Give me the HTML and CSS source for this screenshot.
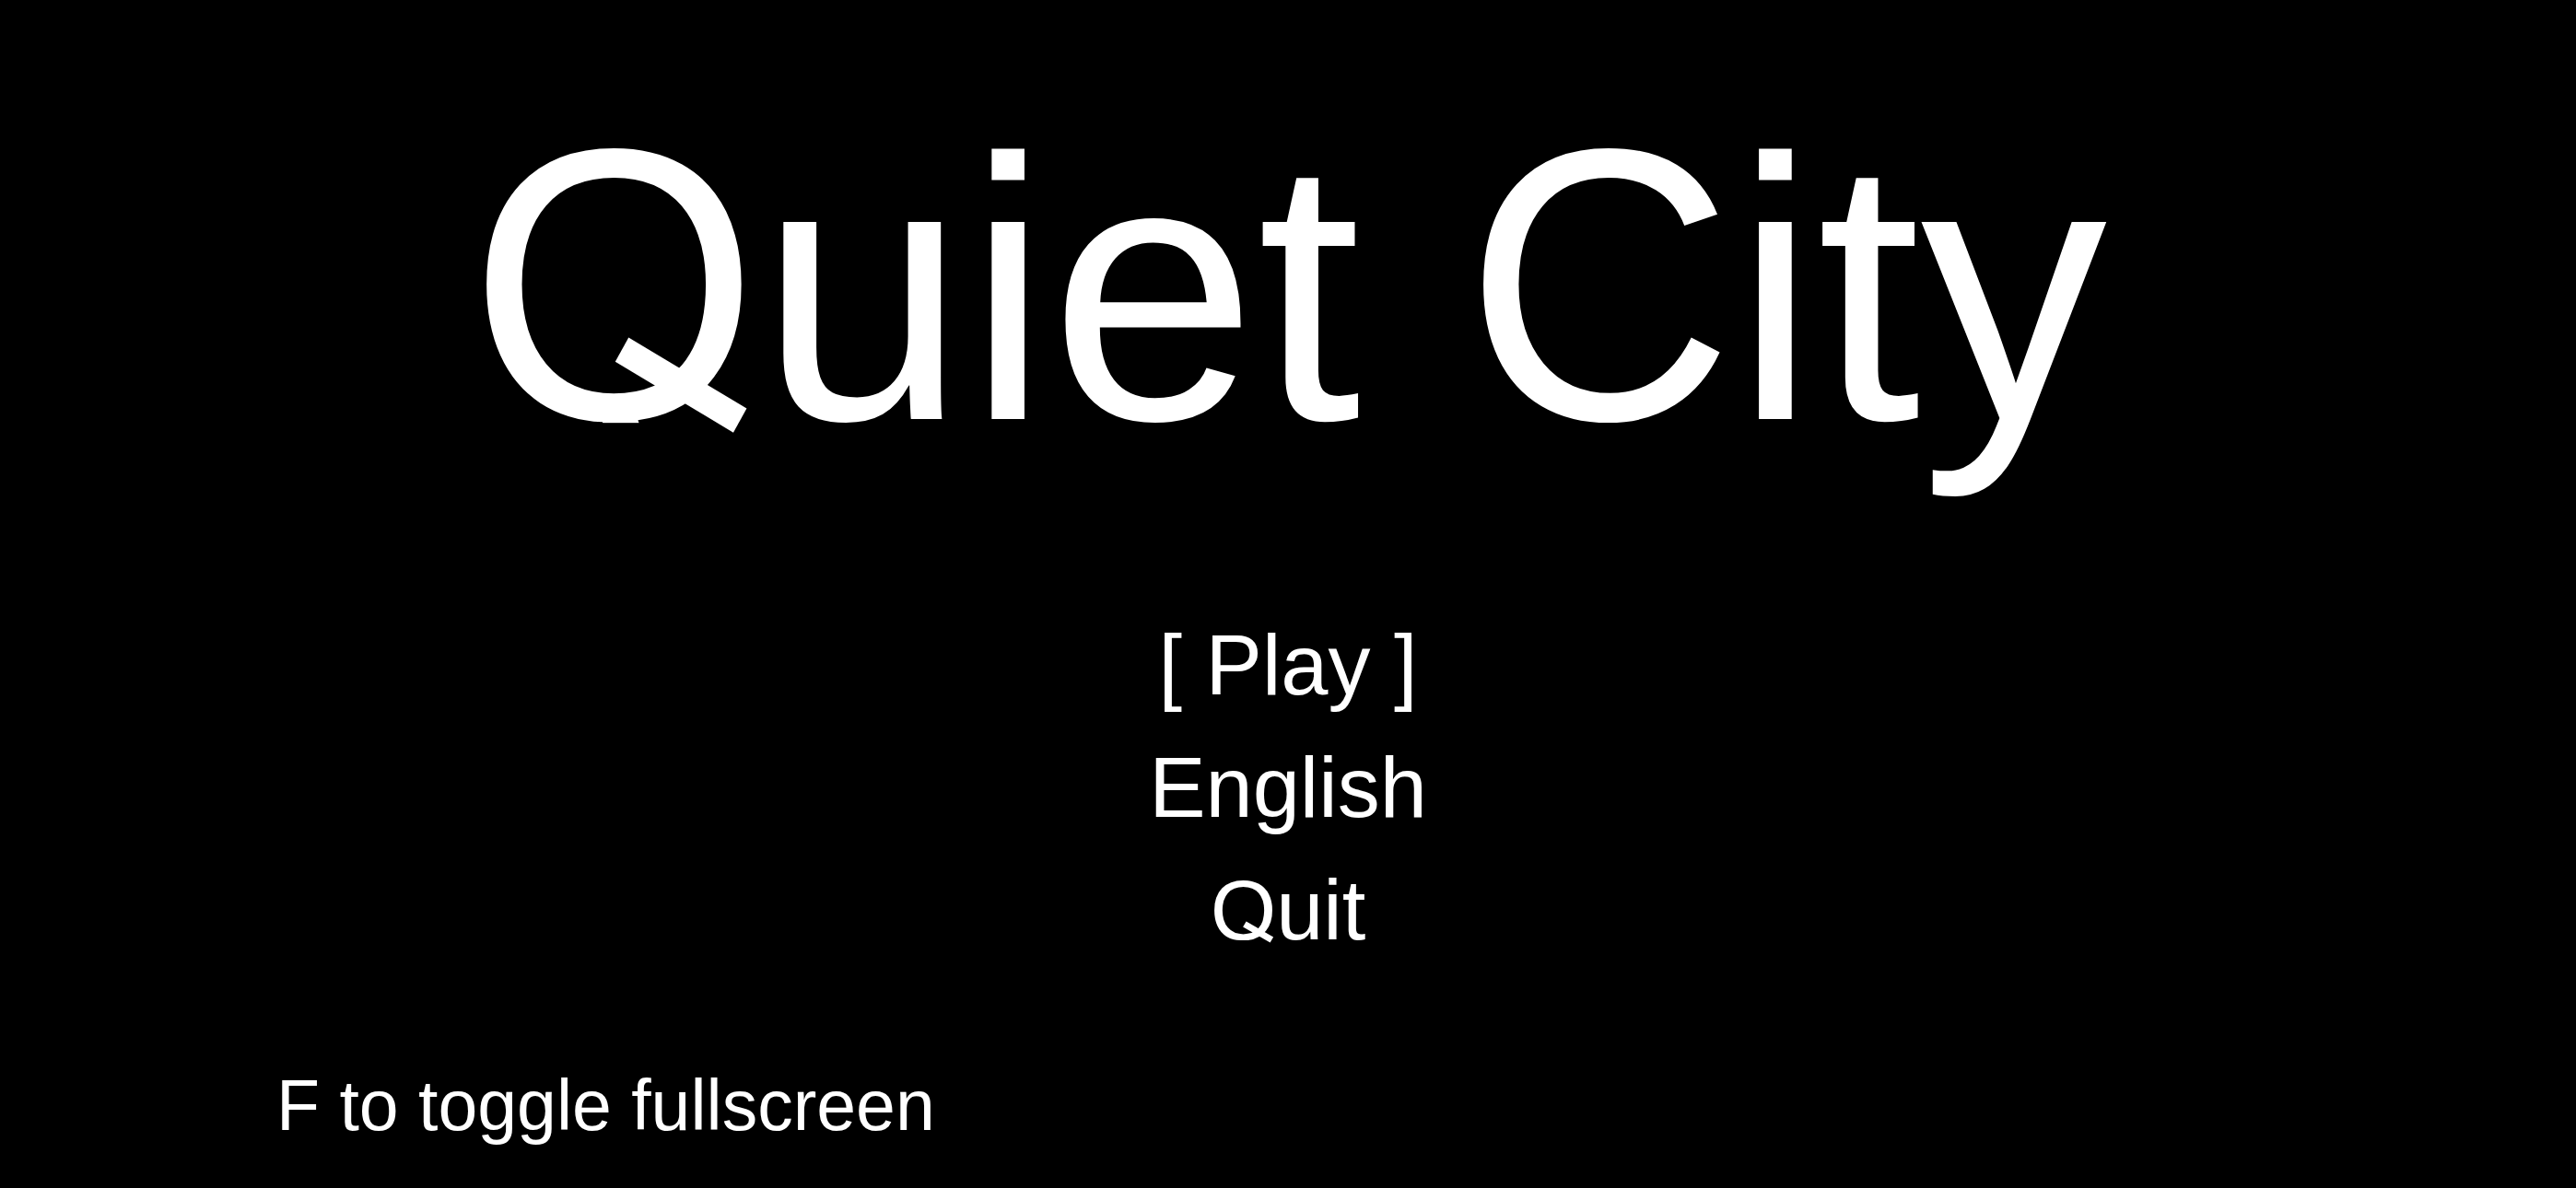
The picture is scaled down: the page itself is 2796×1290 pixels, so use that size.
FILE: index.html
```html
<!DOCTYPE html>
<html lang="en">
<head>
  <meta charset="UTF-8">
  <meta name="viewport" content="width=device-width, initial-scale=1.0">
  <title>Quiet City</title>
  <link rel="stylesheet" href="styles.css">
</head>
<body>
  <main class="title-screen">
    <h1 class="game-title"><span class="cap q">Q</span>uiet <span class="cap">C</span>ity</h1>

    <ul class="menu">
      <li class="menu-item selected">[ Play ]</li>
      <li class="menu-item">English</li>
      <li class="menu-item"><span class="q">Q</span>uit</li>
    </ul>

    <p class="hint">F to toggle fullscreen</p>
  </main>
</body>
</html>
```

FILE: styles.css
```css
/* title screen */
html, body {
  height: 100%;
}

body {
  margin: 0;
  background: #000;
  color: #fff;
  font-family: 'Liberation Sans', Arial, sans-serif;
  overflow: hidden;
}

.title-screen {
  display: flex;
  flex-direction: column;
  padding-top: 112px;
}

.game-title {
  margin: 0;
  font-size: 405px;
  font-weight: normal;
  line-height: 1;
  text-align: center;
}

/* taller capitals, scaled from the baseline */
.cap {
  display: inline-block;
  line-height: 1;
  transform: scaleY(1.04);
  transform-origin: 50% 0.8465em;
}

/* Q with a straight tail across the bowl */
.q {
  display: inline-block;
  position: relative;
  line-height: 1;
}

.q::before {
  content: '';
  position: absolute;
  left: 0.32em;
  top: 0.857em;
  width: 0.4em;
  height: 0.2em;
  background: #000;
}

.q::after {
  content: '';
  position: absolute;
  left: 0.41em;
  top: 0.633em;
  width: 0.365em;
  height: 0.072em;
  background: #fff;
  transform-origin: left center;
  transform: rotate(30deg);
}

.menu {
  list-style: none;
  margin: 139px 0 0;
  padding: 0;
  text-align: center;
}

.menu-item {
  font-size: 92px;
  line-height: 133px;
}

.hint {
  margin: 99px 0 0;
  padding-left: 300px;
  font-size: 77px;
  line-height: 1.2;
}
```
